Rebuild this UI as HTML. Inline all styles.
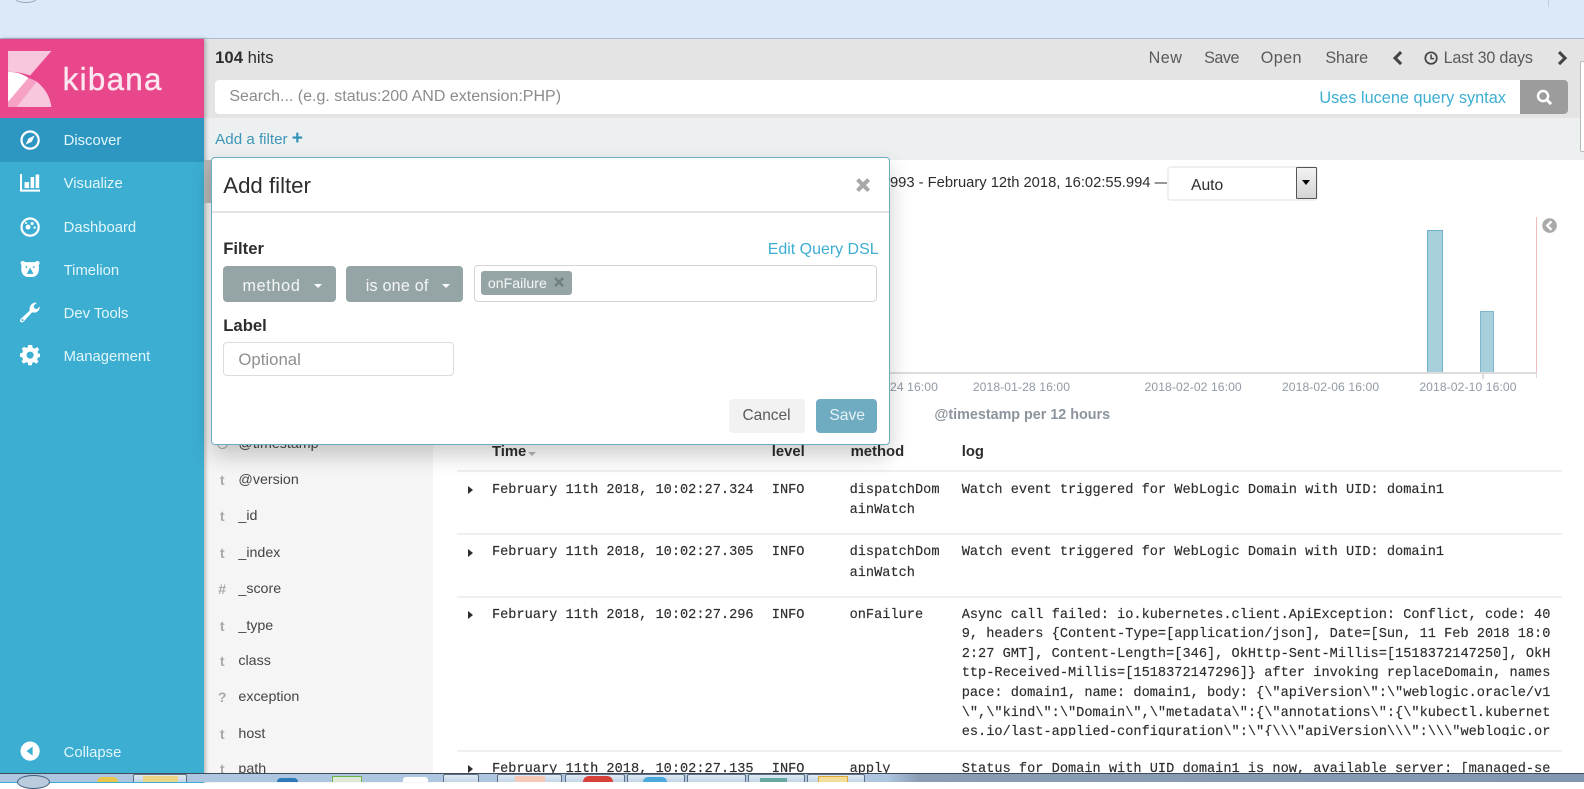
<!DOCTYPE html>
<html><head><meta charset="utf-8">
<style>
html,body{margin:0;padding:0;width:1584px;height:782px;overflow:hidden;background:#fff;font-family:"Liberation Sans",sans-serif;color:#2d2d2d}
div,span,svg{position:absolute}
.t{white-space:nowrap;line-height:20px}
.nav{left:63px;color:#e2f6fb;font-size:14.7px}
.top{top:48px;font-size:16px;color:#5a5a5a}
.f{left:236px;font-size:14.1px;color:#444}
.k{left:215px;width:10px;text-align:center;font-size:14px;color:#a9a9a9;font-weight:bold}
.m{font-family:"Liberation Mono",monospace;font-size:13.5px;color:#2d2d2d;white-space:pre;line-height:20px;-webkit-text-stroke:.15px #2d2d2d}
.th{font-size:14.7px;font-weight:bold;top:437.500px;color:#2d2d2d}
.x{top:373px;font-size:12px;color:#8f9aa5;letter-spacing:.1px}
.sep{left:452px;width:1094px;height:2px;background:#ecf0f1}
.ar{width:0;height:0;border-left:5px solid #2d2d2d;border-top:4px solid transparent;border-bottom:4px solid transparent;left:463px}
.tb{top:774px;height:8px;background:linear-gradient(#dfe9f4,#c3d4e6);border:1px solid #5e6f82;border-bottom:0;border-radius:2px 2px 0 0;box-sizing:border-box}
</style></head><body>
<div style="left:0;top:0;width:1568px;height:775px;zoom:1.0102;overflow:hidden">
<!-- browser chrome -->
<div style="left:0;top:0;width:1584px;height:37.500px;background:#dbe9f9"></div>
<div style="left:0;top:37.500px;width:1584px;height:1px;background:#a9bdd1"></div>
<div style="left:15px;top:-6px;width:22px;height:8.500px;border:1px solid #9aa5b0;border-radius:50%;box-sizing:border-box"></div>
<div style="left:1532px;top:0;width:1px;height:7px;background:#c4cfdb"></div>

<!-- main bg -->
<div style="left:202px;top:38.500px;width:1382px;height:737px;background:#fff"></div>
<div style="left:202px;top:38.500px;width:1382px;height:78px;background:#e4e4e4"></div>
<div style="left:202px;top:116.500px;width:1382px;height:42px;background:#ecf0f1"></div>
<div style="left:202px;top:158.500px;width:226.500px;height:617px;background:#f5f5f5"></div>
<div style="left:1564px;top:60px;width:6px;height:90px;background:#fff;border:1px solid #b8b8b8;border-right:0;box-sizing:border-box;border-radius:2px 0 0 2px"></div>

<!-- sidebar -->
<div style="left:0;top:38.500px;width:202px;height:737px;background:#3caed2;box-shadow:2px 0 4px rgba(0,0,0,.28)"></div>
<div style="left:0;top:38.500px;width:202px;height:78px;background:#e8488b"></div>
<div style="left:0;top:116.500px;width:202px;height:43.500px;background:#2d97c1"></div>
<svg style="left:8px;top:50.500px" width="43" height="55.500" viewBox="0 0 43.300 56">
<path d="M0 0H43.300L22 24.500C15 22 7 20.500 0 21Z" fill="#f9c7dd"/>
<path d="M0 21C7 20.500 14 22.500 20.500 27L0 51Z" fill="#fff"/>
<path d="M20.500 27C23.500 28 26 29 28.500 30.500L8.500 56H0V51Z" fill="#f6a2c5"/>
<path d="M28.500 30.500C36 36.500 42 45 43.300 56H8.500Z" fill="#f9c7dd"/>
</svg>
<div class="t" style="left:62px;top:61px;font-size:31px;line-height:36px;color:#fce6f0;letter-spacing:1.300px;-webkit-text-stroke:.4px #fce6f0">kibana</div>

<svg style="left:20px;top:129px" width="20" height="20" viewBox="0 0 20 20"><circle cx="10" cy="10" r="8.500" fill="none" stroke="#fff" stroke-width="2.200"/><path d="M14.500 5.500L11.600 11.600L5.500 14.500L8.400 8.400Z" fill="#fff"/></svg>
<div class="t nav" style="top:129.500px">Discover</div>
<svg style="left:20px;top:172px" width="20" height="18" viewBox="0 0 20 18"><path d="M0 0H2V15.500H20V17.500H0Z M4.500 8H9V14H4.500Z M10.500 3H14V14H10.500Z M15.500 0.500H19V14H15.500Z" fill="#fff"/></svg>
<div class="t nav" style="top:172.500px">Visualize</div>
<svg style="left:20px;top:215px" width="20" height="20" viewBox="0 0 20 20"><circle cx="10" cy="10" r="8.500" fill="none" stroke="#fff" stroke-width="2.200"/><circle cx="8" cy="10" r="2.400" fill="#fff"/><circle cx="12" cy="6.500" r="1.500" fill="#fff"/><circle cx="6" cy="6" r="1" fill="#fff"/><circle cx="14.500" cy="10.500" r="1.200" fill="#fff"/></svg>
<div class="t nav" style="top:215.500px">Dashboard</div>
<svg style="left:20px;top:258px" width="20" height="16" viewBox="0 0 20 17"><path d="M0 2C0 .8 1 0 2.500 0C3.500 0 4.200 .6 4.800 1.200H15.200C15.800 .6 16.500 0 17.500 0C19 0 20 .8 20 2C20 3 19.500 3.800 19 4.200C19.500 8 19.500 11 18 13.500C16 16.500 13 17 10 17C7 17 4 16.500 2 13.500C.5 11 .5 8 1 4.200C.5 3.800 0 3 0 2Z" fill="#fff"/><path d="M6.800 7L5.500 5.700M13.200 7L14.500 5.700" stroke="#3caed2" stroke-width="1.600"/><path d="M10 7L13.500 13.500H6.500Z" fill="#3caed2"/></svg>
<div class="t nav" style="top:258.500px">Timelion</div>
<svg style="left:20px;top:299px" width="20" height="21" viewBox="0 0 20 21"><path d="M19.500 4.500C19.800 7.500 17.500 10.500 14 10.500C13.200 10.500 12.500 10.300 12 10.100L4 19C3 20.500 1 20.500 .5 19.500C-.3 18.500 0 17.500 1 16.500L9.600 8.600C8.800 5 11 0.800 15.500 0.500L16.500.8L13.500 3.800L14.200 6.300L16.700 7L19.500 4.500Z" fill="#fff"/><circle cx="2.500" cy="18" r="1" fill="#3caed2"/></svg>
<div class="t nav" style="top:300.500px">Dev Tools</div>
<svg style="left:20px;top:342px" width="20" height="20" viewBox="0 0 20 20"><path fill-rule="evenodd" d="M8 0H12L12.600 2.800L14.600 3.600L17 2L19 4.500L17.300 6.600L18 8.500L20 8.500V11.800L17.700 12.400L17 14.300L18.300 16.600L16 18.500L14 17L12.200 17.600L11.800 20H8.200L7.700 17.600L5.800 17L3.800 18.500L1.500 16.300L3 14.200L2.200 12.300L0 11.800V8.300L2.300 7.800L3 6L1.700 3.800L4 1.700L6 3L7.700 2.400Z M10 6.500A3.500 3.500 0 1 0 10 13.500A3.500 3.500 0 1 0 10 6.500Z" fill="#fff"/></svg>
<div class="t nav" style="top:343.500px">Management</div>
<svg style="left:20px;top:734px" width="20" height="20" viewBox="0 0 20 20"><circle cx="10" cy="10" r="9.500" fill="#fff"/><path d="M12.500 5.500V14.500L6.500 10Z" fill="#3caed2"/></svg>
<div class="t nav" style="top:735.500px">Collapse</div>

<!-- top bar -->
<div class="t" style="left:213px;top:47.500px;font-size:16.500px;color:#2d2d2d"><b style="position:static">104</b> hits</div>
<div class="t top" style="left:1137px;letter-spacing:.5px">New</div>
<div class="t top" style="left:1192px;letter-spacing:-.5px">Save</div>
<div class="t top" style="left:1248px;letter-spacing:.4px">Open</div>
<div class="t top" style="left:1312px;letter-spacing:-.1px">Share</div>
<svg style="left:1378px;top:50px" width="11" height="14" viewBox="0 0 11 14"><path d="M9 1L3 7L9 13" fill="none" stroke="#444" stroke-width="3"/></svg>
<svg style="left:1410px;top:50px" width="14" height="14" viewBox="0 0 14 14"><circle cx="7" cy="7" r="5.700" fill="none" stroke="#444" stroke-width="1.700"/><path d="M7 3.500V7.500H10" fill="none" stroke="#444" stroke-width="1.500"/></svg>
<div class="t top" style="left:1429px;letter-spacing:-.2px">Last 30 days</div>
<svg style="left:1541px;top:50px" width="11" height="14" viewBox="0 0 11 14"><path d="M2 1L8 7L2 13" fill="none" stroke="#444" stroke-width="3"/></svg>

<!-- search -->
<div style="left:213px;top:79px;width:1293px;height:33.500px;background:#fff;border-radius:4px 0 0 4px"></div>
<div class="t" style="left:227px;top:86.500px;font-size:15.850px;color:#8c8c8c">Search... (e.g. status:200 AND extension:PHP)</div>
<div class="t" style="left:1306px;top:87px;font-size:16.150px;color:#3caed2">Uses lucene query syntax</div>
<div style="left:1505px;top:79px;width:47px;height:33.500px;background:#9c9c9c;border-radius:0 4px 4px 0"></div>
<svg style="left:1520px;top:88px" width="17" height="17" viewBox="0 0 17 17"><circle cx="7" cy="7" r="5" fill="none" stroke="#fff" stroke-width="2.400"/><path d="M10.500 10.500L15 15" stroke="#fff" stroke-width="2.800"/></svg>

<div class="t" style="left:213px;top:128.500px;font-size:15px;color:#3f96b8">Add a filter <b style="position:static;font-size:19px;line-height:14px;color:#2f90b5">+</b></div>

<!-- dim area behind modal -->
<div style="left:202px;top:158.500px;width:8px;height:42.500px;background:#b5b5b5"></div>

<!-- interval -->
<div class="t" style="left:881px;top:171px;font-size:14.600px;color:#2d2d2d">993 - February 12th 2018, 16:02:55.994 &#8212;</div>
<div style="left:1155px;top:164px;width:150px;height:35px;background:#fff;border:2px solid #ecf0f1;border-radius:4px;box-sizing:border-box"></div>
<div class="t" style="left:1179px;top:174.500px;font-size:15.500px;color:#2d2d2d">Auto</div>
<div style="left:1283px;top:165px;width:20.600px;height:32px;background:linear-gradient(#f3f3f3,#d4d4d4);border:1px solid #555;box-sizing:border-box;border-radius:1px"></div>
<div style="left:1289px;top:178.500px;width:0;height:0;border-left:4.500px solid transparent;border-right:4.500px solid transparent;border-top:5px solid #000"></div>

<!-- chart -->
<div style="left:881px;top:368px;width:640px;height:2px;background:#dcdcdc"></div>
<div style="left:1413px;top:228px;width:15px;height:140px;background:#a7cfdc;border:1px solid #6fb0ca;border-bottom:0;box-sizing:border-box"></div>
<div style="left:1465px;top:308px;width:14px;height:60px;background:#a7cfdc;border:1px solid #7fb6cc;border-bottom:0;box-sizing:border-box"></div>
<div style="left:1520px;top:215px;width:1.500px;height:153px;background:#f3b9bd"></div>
<div style="left:1520px;top:369px;width:1px;height:5px;background:#dcdcdc"></div>
<div style="left:1467px;top:370px;width:2px;height:5px;background:#dcdcdc"></div>
<svg style="left:1526px;top:216px" width="15" height="15" viewBox="0 0 16 16"><circle cx="8" cy="8" r="7.700" fill="#aaa"/><path d="M10 3.500L5.500 8L10 12.500" fill="none" stroke="#fff" stroke-width="2.500"/></svg>
<div class="t x" style="left:881px">24 16:00</div>
<div class="t x" style="left:963px">2018-01-28 16:00</div>
<div class="t x" style="left:1133px">2018-02-02 16:00</div>
<div class="t x" style="left:1269px">2018-02-06 16:00</div>
<div class="t x" style="left:1405px">2018-02-10 16:00</div>
<div class="t" style="left:925px;top:400.500px;font-size:14.200px;font-weight:bold;color:#8b949c">@timestamp per 12 hours</div>

<!-- fields -->
<div class="t f" style="top:430px">@timestamp</div>
<div style="left:215px;top:433px;width:11px;height:11px;border:1.500px solid #aaa;border-radius:50%;box-sizing:border-box"></div>
<div class="t k" style="top:465.500px">t</div><div class="t f" style="top:465.500px">@version</div>
<div class="t k" style="top:501px">t</div><div class="t f" style="top:501px">_id</div>
<div class="t k" style="top:538px">t</div><div class="t f" style="top:538px">_index</div>
<div class="t k" style="top:573.500px">#</div><div class="t f" style="top:573.500px">_score</div>
<div class="t k" style="top:609.500px">t</div><div class="t f" style="top:609.500px">_type</div>
<div class="t k" style="top:644.500px">t</div><div class="t f" style="top:644.500px">class</div>
<div class="t k" style="top:680.500px">?</div><div class="t f" style="top:680.500px">exception</div>
<div class="t k" style="top:716.500px">t</div><div class="t f" style="top:716.500px">host</div>
<div class="t k" style="top:751.500px">t</div><div class="t f" style="top:751.500px">path</div>

<!-- table -->
<div class="t th" style="left:487px">Time</div>
<div style="left:523px;top:447.500px;width:0;height:0;border-left:4.500px solid transparent;border-right:4.500px solid transparent;border-top:4px solid #b5b5b5"></div>
<div class="t th" style="left:764px">level</div>
<div class="t th" style="left:842px">method</div>
<div class="t th" style="left:952px">log</div>
<div class="sep" style="top:465px"></div>
<div class="sep" style="top:528px"></div>
<div class="sep" style="top:590px"></div>
<div class="sep" style="top:742px"></div>

<div class="ar" style="top:481px"></div>
<div class="m" style="left:487px;top:476px">February 11th 2018, 10:02:27.324</div>
<div class="m" style="left:764px;top:476px">INFO</div>
<div class="m" style="left:841px;top:476px">dispatchDom
ainWatch</div>
<div class="m" style="left:952px;top:476px">Watch event triggered for WebLogic Domain with UID: domain1</div>

<div class="ar" style="top:543px"></div>
<div class="m" style="left:487px;top:538px">February 11th 2018, 10:02:27.305</div>
<div class="m" style="left:764px;top:538px">INFO</div>
<div class="m" style="left:841px;top:538px">dispatchDom
ainWatch</div>
<div class="m" style="left:952px;top:538px">Watch event triggered for WebLogic Domain with UID: domain1</div>

<div class="ar" style="top:605px"></div>
<div class="m" style="left:487px;top:599.500px">February 11th 2018, 10:02:27.296</div>
<div class="m" style="left:764px;top:599.500px">INFO</div>
<div class="m" style="left:841px;top:599.500px">onFailure</div>
<div style="left:952px;top:599.500px;width:600px;height:129.500px;overflow:hidden"><div class="m" style="left:0;top:0;line-height:19.400px">Async call failed: io.kubernetes.client.ApiException: Conflict, code: 40
9, headers {Content-Type=[application/json], Date=[Sun, 11 Feb 2018 18:0
2:27 GMT], Content-Length=[346], OkHttp-Sent-Millis=[1518372147250], OkH
ttp-Received-Millis=[1518372147296]} after invoking replaceDomain, names
pace: domain1, name: domain1, body: {\"apiVersion\":\"weblogic.oracle/v1
\",\"kind\":\"Domain\",\"metadata\":{\"annotations\":{\"kubectl.kubernet
es.io/last-applied-configuration\":\"{\\\"apiVersion\\\":\\\"weblogic.or</div></div>

<div class="ar" style="top:757px"></div>
<div class="m" style="left:487px;top:752.500px">February 11th 2018, 10:02:27.135</div>
<div class="m" style="left:764px;top:752.500px">INFO</div>
<div class="m" style="left:841px;top:752.500px">apply</div>
<div class="m" style="left:952px;top:752.500px">Status for Domain with UID domain1 is now, available server: [managed-se</div>

<!-- modal -->
<div style="left:209px;top:155.500px;width:672px;height:285px;background:#fff;border:1px solid #6eadc1;border-radius:4px;box-sizing:border-box;box-shadow:0 10px 22px rgba(0,0,0,.2)"></div>
<div class="t" style="left:221px;top:174px;font-size:22px;color:#2d2d2d">Add filter</div>
<svg style="left:846px;top:175px" width="16" height="16" viewBox="0 0 16 16"><path d="M2.500 2.500L13.500 13.500M13.500 2.500L2.500 13.500" stroke="#a8a8a8" stroke-width="4"/></svg>
<div style="left:210px;top:209px;width:670px;height:2px;background:#e4e4e4"></div>
<div class="t" style="left:221px;top:236.500px;font-size:16.500px;font-weight:bold;color:#2d2d2d">Filter</div>
<div class="t" style="left:760px;top:237.500px;font-size:15.800px;color:#3caed2">Edit Query DSL</div>
<div style="left:221px;top:263.300px;width:112px;height:36px;background:#95a5a6;border-radius:4px"></div>
<div class="t" style="left:240px;top:273px;font-size:16px;color:#f4f6f6;letter-spacing:.7px">method</div>
<div style="left:311px;top:281px;width:0;height:0;border-left:4px solid transparent;border-right:4px solid transparent;border-top:4px solid #fff"></div>
<div style="left:342.500px;top:263.300px;width:116px;height:36px;background:#95a5a6;border-radius:4px"></div>
<div class="t" style="left:362px;top:273px;font-size:16px;color:#f4f6f6;letter-spacing:.2px">is one of</div>
<div style="left:437.500px;top:281px;width:0;height:0;border-left:4px solid transparent;border-right:4px solid transparent;border-top:4px solid #fff"></div>
<div style="left:469.300px;top:262.400px;width:399px;height:37px;background:#fff;border:1px solid #d4d4d4;border-radius:4px;box-sizing:border-box"></div>
<div style="left:476px;top:268px;width:90.500px;height:24px;background:#95a5a6;border-radius:3px"></div>
<div class="t" style="left:483px;top:270px;font-size:14px;color:#f4f6f6">onFailure</div>
<svg style="left:548px;top:274px" width="10" height="10" viewBox="0 0 10 10"><path d="M1 1L9 9M9 1L1 9" stroke="#6f7f80" stroke-width="2.400"/></svg>
<div class="t" style="left:221px;top:313px;font-size:16.500px;font-weight:bold;color:#2d2d2d">Label</div>
<div style="left:221px;top:338.500px;width:228.500px;height:34px;background:#fff;border:1px solid #dcdcdc;border-radius:4px;box-sizing:border-box"></div>
<div class="t" style="left:236px;top:346px;font-size:16.600px;color:#8f8f8f">Optional</div>
<div style="left:721.500px;top:395px;width:75.500px;height:33.500px;background:#f2f2f2;border-radius:4px"></div>
<div class="t" style="left:735px;top:402px;font-size:15.300px;color:#5a5a5a">Cancel</div>
<div style="left:808px;top:395px;width:60px;height:33.500px;background:#6fabc1;border-radius:4px"></div>
<div class="t" style="left:821px;top:402px;font-size:15.500px;color:#e6f2f6">Save</div>
</div>

<!-- taskbar (true pixel coordinates) -->
<div style="left:0;top:773px;width:1584px;height:9px;background:linear-gradient(90deg,#aec6e0 0,#aec6e0 56%,#8a9db4 58%,#8297b0 100%);border-top:1px solid #3e4b5a;box-sizing:border-box"></div>
<div style="left:17px;top:775px;width:33px;height:14px;border:1px solid #3f5f80;border-radius:50%;background:#b9cbdd;box-sizing:border-box"></div>
<div class="tb" style="left:133px;width:54px"></div>
<div style="left:143px;top:776px;width:35px;height:6px;background:#ecd489"></div>
<div style="left:97px;top:777px;width:21px;height:5px;background:#e9c54a;border-radius:10px 10px 0 0"></div>
<div style="left:277px;top:778px;width:21px;height:4px;background:#2c78b8;border-radius:10px 10px 0 0"></div>
<div style="left:332px;top:776px;width:30px;height:6px;background:#dfe9d8;border:1px solid #6cb24a;border-bottom:0;box-sizing:border-box"></div>
<div style="left:403px;top:777px;width:25px;height:5px;background:#fff;border-radius:3px 3px 0 0"></div>
<div class="tb" style="left:443px;width:36px"></div>
<div class="tb" style="left:497px;width:65px"></div>
<div style="left:515px;top:776px;width:30px;height:6px;background:#f6c9b8"></div>
<div class="tb" style="left:565px;width:60px"></div>
<div style="left:583px;top:776px;width:30px;height:6px;background:#d8413a;border-radius:15px 15px 0 0"></div>
<div class="tb" style="left:627px;width:58px"></div>
<div style="left:643px;top:777px;width:24px;height:5px;background:#49a8dc;border-radius:12px 12px 0 0"></div>
<div class="tb" style="left:687px;width:59px"></div>
<div class="tb" style="left:748px;width:57px"></div>
<div style="left:760px;top:778px;width:27px;height:4px;background:#66a8a0"></div>
<div class="tb" style="left:807px;width:58px"></div>
<div style="left:818px;top:776px;width:30px;height:6px;background:#f5dd9a;border:1px solid #e2a83b;border-bottom:0;box-sizing:border-box"></div>
</body></html>
